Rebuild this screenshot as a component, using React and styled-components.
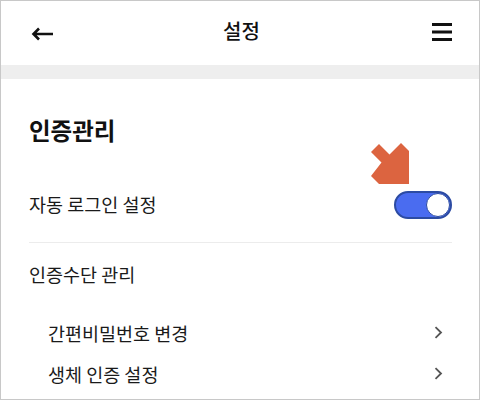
import React, { useState } from 'react'
import styled, { createGlobalStyle } from 'styled-components'

const GlobalStyle = createGlobalStyle`
    html, body {
        margin: 0;
        padding: 0;
        background: #ffffff;
    }
    body {
        font-family: "Noto Sans CJK KR", "Noto Sans", sans-serif;
        color: #111111;
    }
`

const Frame = styled.div`
    width: 480px;
    height: 400px;
    box-sizing: border-box;
    border: 1px solid #c8c8c8;
    background: #ffffff;
    overflow: hidden;
    display: flex;
    flex-direction: column;
`

const Header = styled.header`
    height: 64px;
    box-sizing: border-box;
    display: grid;
    grid-template-columns: 1fr auto 1fr;
    align-items: center;
    padding: 0 27px 4px 30px;
`

const IconSlot = styled.span`
    display: flex;
    align-items: center;
    justify-self: ${props => (props.right ? 'end' : 'start')};
    margin-top: ${props => props.shift || 0}px;
`

const Title = styled.h1`
    margin: 0;
    font-size: 20px;
    font-weight: 500;
    line-height: 24px;
    color: #111111;
`

const Band = styled.div`
    height: 14px;
    background: #eeeeee;
`

const Content = styled.main`
    padding: 0 27px 0 28px;
    display: flex;
    flex-direction: column;
`

const SectionTitle = styled.h2`
    margin: 35px 0 0;
    font-size: 23.5px;
    font-weight: 700;
    line-height: 33px;
    color: #111111;
`

const Row = styled.div`
    display: flex;
    align-items: center;
    justify-content: space-between;
    height: ${props => props.height || 41}px;
    margin-top: ${props => props.gap || 0}px;
    padding-left: ${props => (props.sub ? 19 : 0)}px;
    font-size: 18.5px;
    color: #1a1a1a;
`

const Divider = styled.hr`
    margin: 9px 0 0;
    border: 0;
    border-top: 1px solid #ececec;
`

const ToggleWrap = styled.div`
    position: relative;
    margin-top: 2px;
`

const Toggle = styled.button`
    width: 58px;
    height: 28px;
    box-sizing: border-box;
    border: 2px solid #2c4ba3;
    border-radius: 14px;
    background: ${props => (props.on ? '#4a6cf0' : '#cccccc')};
    padding: 0;
    display: flex;
    align-items: center;
    justify-content: ${props => (props.on ? 'flex-end' : 'flex-start')};
    cursor: pointer;
`

const Knob = styled.span`
    width: 24px;
    height: 24px;
    box-sizing: border-box;
    border-radius: 50%;
    background: #ffffff;
    border: 1.5px solid #2c4ba3;
`

const Pointer = styled.svg`
    position: absolute;
    left: -25px;
    top: -49px;
`

const Chevron = styled.svg`
    margin-right: 9px;
`

function BackIcon() {
    return (
        <svg width="23" height="14" viewBox="0 0 23 14" fill="none">
            <path d="M22 7H2.5M8 1.5L2.5 7L8 12.5" stroke="#111" strokeWidth="2.6" />
        </svg>
    )
}

function MenuIcon() {
    return (
        <svg width="20" height="18" viewBox="0 0 20 18">
            <rect x="0" y="0" width="20" height="3" fill="#111" />
            <rect x="0" y="7.5" width="20" height="3" fill="#111" />
            <rect x="0" y="15" width="20" height="3" fill="#111" />
        </svg>
    )
}

function ChevronIcon() {
    return (
        <Chevron width="9" height="13" viewBox="0 0 9 13" fill="none">
            <path d="M1.5 1.2L7 6.5L1.5 11.8" stroke="#555" strokeWidth="1.8" />
        </Chevron>
    )
}

export default function App() {
    const [autoLogin, setAutoLogin] = useState(true)

    return (
        <React.Fragment>
            <GlobalStyle />
            <Frame>
                <Header>
                    <IconSlot shift={6}><BackIcon /></IconSlot>
                    <Title>설정</Title>
                    <IconSlot right shift={2}><MenuIcon /></IconSlot>
                </Header>
                <Band />
                <Content>
                    <SectionTitle>인증관리</SectionTitle>
                    <Row height={58} gap={28}>
                        <span>자동 로그인 설정</span>
                        <ToggleWrap>
                            <Pointer width="42" height="44" viewBox="0 0 42 44">
                                <polygon
                                    points="10,2 20.5,12.5 32,1 40,9 40,42 10,42 2,34 12.5,20.5 2,10"
                                    fill="#dc6440"
                                />
                            </Pointer>
                            <Toggle on={autoLogin} onClick={() => setAutoLogin(!autoLogin)}>
                                <Knob />
                            </Toggle>
                        </ToggleWrap>
                    </Row>
                    <Divider />
                    <Row height={40} gap={11}>인증수단 관리</Row>
                    <Row sub gap={18}>
                        <span>간편비밀번호 변경</span>
                        <ChevronIcon />
                    </Row>
                    <Row sub>
                        <span>생체 인증 설정</span>
                        <ChevronIcon />
                    </Row>
                </Content>
            </Frame>
        </React.Fragment>
    )
}
